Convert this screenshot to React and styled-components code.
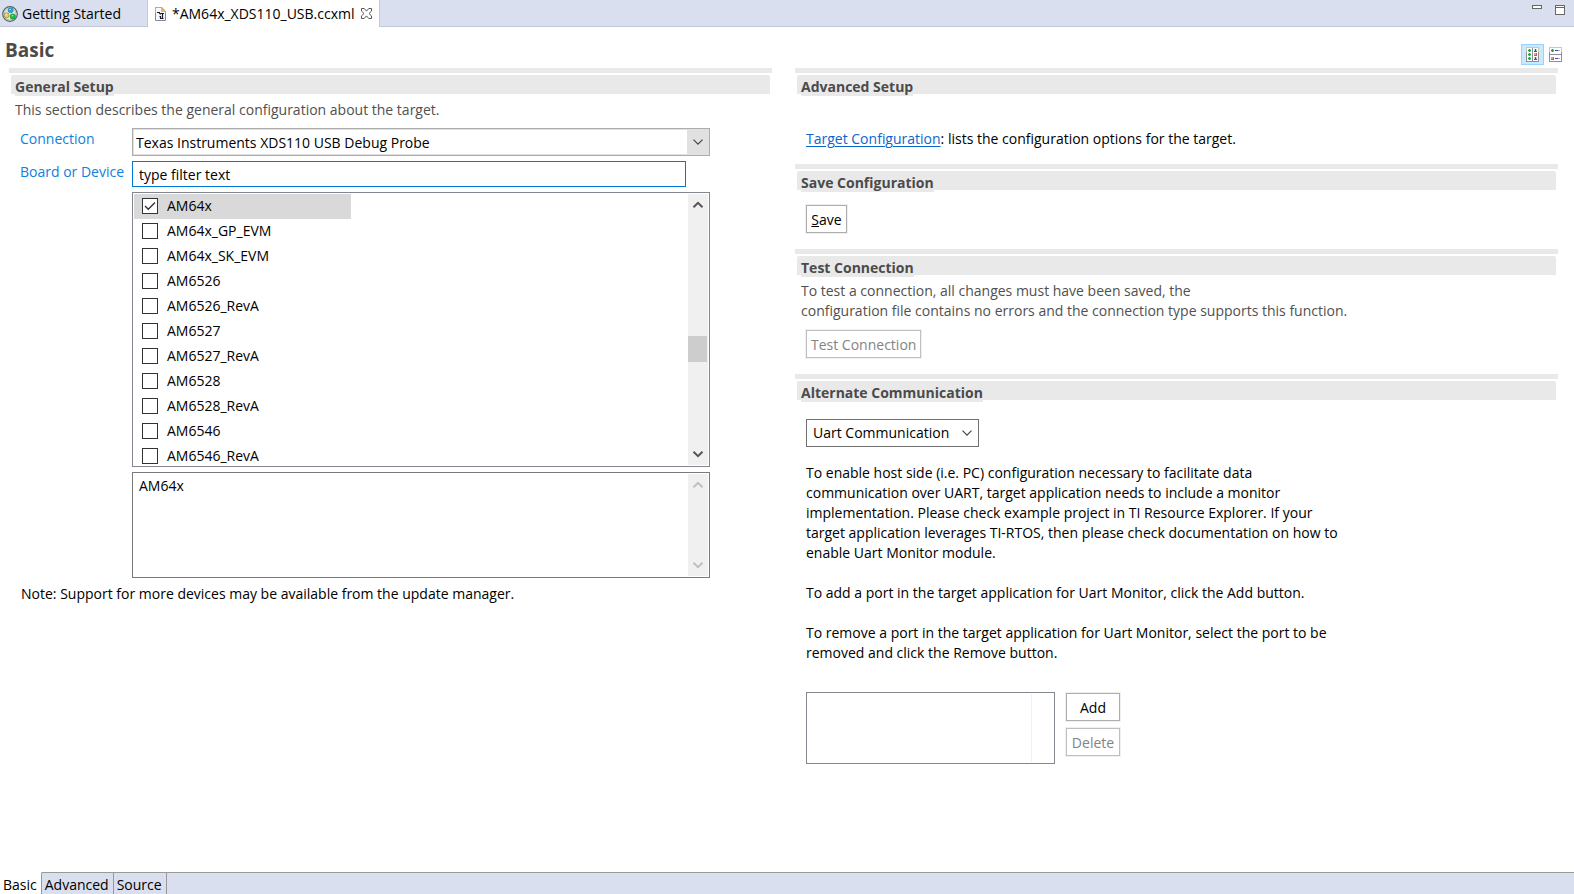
import React, { useState } from "react";
import styled, { createGlobalStyle, css } from "styled-components";

const colors = {
  text: "#000000",
  muted: "#505050",
  heading: "#4b4b4b",
  bar: "#e9e9e9",
  tabs: "#d9dfef",
  tabsLine: "#c3c8d8",
  label: "#0f80dc",
  link: "#0a66cc",
};

const GlobalStyle = createGlobalStyle`
  *, *::before, *::after { box-sizing: border-box; }
  body { margin: 0; background: #fff; }
  body, button, input, select, textarea {
    font-family: "Open Sans", "Noto Sans", sans-serif;
    font-size: 14px;
    line-height: 20px;
    color: ${colors.text};
  }
`;

const Page = styled.div`
  display: flex;
  flex-direction: column;
  min-height: 100vh;
`;

const TabBar = styled.nav`
  display: flex;
  height: 27px;
  background: ${colors.tabs};
  border-bottom: 1px solid ${colors.tabsLine};
`;

const EditorTab = styled.button`
  display: flex;
  align-items: center;
  gap: 4px;
  height: 27px;
  padding: 0 26px 0 2px;
  border: 0;
  border-right: 1px solid ${colors.tabsLine};
  background: none;
  white-space: nowrap;
  ${(p) =>
    p.$active &&
    css`
      gap: 6px;
      padding: 0 7px;
      background: #fff;
    `}
`;

const WindowButtons = styled.div`
  display: flex;
  align-items: flex-start;
  gap: 13px;
  margin-left: auto;
  padding: 5px 9px 0 0;
`;

const IconButton = styled.button`
  display: flex;
  padding: 0;
  border: 0;
  background: none;
`;

const PageHeader = styled.header`
  display: flex;
  align-items: flex-start;
  justify-content: space-between;
  height: 41px;
  padding: 9px 7px 0 5px;
`;

const PageTitle = styled.h1`
  margin: 0;
  font-size: 19px;
  line-height: 28px;
  font-weight: 700;
  color: ${colors.heading};
`;

const ViewButtons = styled.div`
  display: flex;
  padding-top: 8px;
`;

const ViewButton = styled.button`
  display: flex;
  align-items: center;
  justify-content: center;
  width: 23px;
  height: 21px;
  padding: 0;
  border: 1px solid ${(p) => (p.$active ? "#99d1ff" : "transparent")};
  background: ${(p) => (p.$active ? "#cce8ff" : "none")};
`;

const Columns = styled.main`
  flex: 1;
  display: grid;
  grid-template-columns: minmax(0, 1fr) minmax(0, 1fr);
  column-gap: 23px;
  align-items: start;
  padding: 0 16px 16px 9px;
`;

const SectionBox = styled.section`
  border-top: 5px solid ${colors.bar};
  padding-top: 2px;
`;

const SectionBar = styled.div`
  height: 19px;
  margin: 0 2px;
  padding: 0 4px;
  background: ${colors.bar};
  border-radius: 2px 2px 0 0;
`;

const SectionTitle = styled.h2`
  display: inline-block;
  margin: 0;
  padding-top: 3px;
  font-size: 14px;
  line-height: 18px;
  font-weight: 700;
  color: ${colors.heading};
  background: ${colors.bar};
`;

const Description = styled.p`
  margin: 0;
  padding: 6px 6px 0;
  color: ${colors.muted};
`;

const SectionBody = styled.div`
  padding: ${(p) => p.$top}px 0 ${(p) => p.$bottom || 16}px 11px;
`;

const SetupForm = styled.form`
  display: grid;
  grid-template-columns: 112px minmax(0, 1fr);
  row-gap: 5px;
  padding: 8px 62px 0 11px;
`;

const FieldLabel = styled.label`
  line-height: 22px;
  color: ${colors.label};
`;

const SelectBox = styled.div`
  display: grid;
  grid-template-columns: minmax(0, 1fr) 22px;
  align-items: center;
  height: 28px;
  border: ${(p) => (p.$wide ? "1px solid #adadad" : "1px solid #707070")};
  width: ${(p) => (p.$wide ? "100%" : "173px")};
  background: ${(p) =>
    p.$wide ? "linear-gradient(to left, #e1e1e1 22px, #fff 22px)" : "#fff"};
  box-shadow: ${(p) => (p.$wide ? "inset 0 0 0 1px #e1e1e1" : "none")};

  select {
    grid-column: 1 / -1;
    grid-row: 1;
    height: 26px;
    padding: ${(p) => (p.$wide ? "2px 22px 0 3px" : "0 22px 0 6px")};
    border: 0;
    outline: 0;
    appearance: none;
    background: none;
  }

  svg {
    grid-column: 2;
    grid-row: 1;
    justify-self: center;
    pointer-events: none;
  }
`;

const FilterInput = styled.input`
  grid-column: 2;
  height: 26px;
  margin: 0 24px 0 0;
  padding: 0 6px;
  border: 1px solid #0078d7;
  outline: 0;
`;

const ScrollPane = styled.div`
  grid-column: 2;
  display: flex;
  height: ${(p) => p.$height}px;
  padding: 1px;
  border: 1px solid ${(p) => p.$line};
`;

const DeviceList = styled.ul`
  flex: 1;
  margin: 0;
  padding: 0;
  list-style: none;
  overflow: hidden;
`;

const DeviceRow = styled.label`
  display: flex;
  align-items: center;
  gap: 9px;
  width: 217px;
  height: 25px;
  padding: 0 0 1px 8px;
  background: ${(p) => (p.$selected ? "#d9d9d9" : "none")};
`;

const CheckBox = styled.input`
  appearance: none;
  flex: none;
  width: 16px;
  height: 16px;
  margin: 0;
  border: 1px solid #333;
  background: #fff;

  &:checked {
    background: #fff
      url("data:image/svg+xml,%3Csvg xmlns='http://www.w3.org/2000/svg' width='14' height='14' fill='none' stroke='%23333' stroke-width='1.4'%3E%3Cpath d='M2 7l3.3 3.3L12 3.6'/%3E%3C/svg%3E")
      center no-repeat;
  }
`;

const ScrollBar = styled.div`
  display: flex;
  flex-direction: column;
  align-items: center;
  width: 20px;
  padding: 7px 1px 7px 0;
  background: #f0f0f0;
`;

const ScrollTrack = styled.div`
  flex: 1;
  align-self: stretch;
  display: grid;
  grid-template-rows: 128fr 26px 89fr;
`;

const ScrollThumb = styled.div`
  grid-row: 2;
  background: #cdcdcd;
`;

const Details = styled.textarea`
  flex: 1;
  padding: 2px 5px;
  border: 0;
  outline: 0;
  resize: none;
  overflow: hidden;
`;

const Note = styled.p`
  margin: 0;
  padding: 6px 12px;
`;

const TextLink = styled.a`
  color: ${colors.link};
  text-underline-offset: 2px;
`;

const PushButton = styled.button`
  display: block;
  height: 28px;
  min-width: ${(p) => p.$width}px;
  padding: 2px 4px 0;
  border: 1px solid #adadad;
  background: #fff;
  box-shadow: 0 0 0 1px #f0f0f0;
  white-space: nowrap;

  &:disabled {
    border-color: #bfbfbf;
    color: #838383;
  }
`;

const Copy = styled.div`
  padding-top: 16px;

  p {
    margin: 0 0 20px;
  }
`;

const PortArea = styled.div`
  display: flex;
  gap: 11px;
  padding-top: 9px;
`;

const PortList = styled.div`
  width: 249px;
  height: 72px;
  padding: 1px 22px 1px 1px;
  border: 1px solid #828790;

  &::after {
    content: "";
    display: block;
    height: 100%;
    border-right: 1px solid #edf1f8;
  }
`;

const ButtonStack = styled.div`
  display: flex;
  flex-direction: column;
  gap: 7px;
  padding-top: 1px;
`;

const PageTabs = styled.footer`
  display: flex;
  height: 22px;
  background: ${colors.tabs};
`;

const PageTab = styled.button`
  height: 22px;
  padding: 3px 4px 0 3px;
  border: 0;
  border-right: 1px solid #999;
  border-top: 1px solid ${(p) => (p.$active ? "#fff" : "#999")};
  background: ${(p) => (p.$active ? "#fff" : "none")};
  line-height: 18px;
`;

const TabsFill = styled.div`
  flex: 1;
  border-top: 1px solid #999;
`;

function Chevron({ up, thick, color = "#444" }) {
  return (
    <svg width="12" height="8" viewBox="0 0 12 8" fill="none" stroke={color} strokeWidth={thick ? 2 : 1.2} aria-hidden="true">
      <path d={up ? "M1.5 6.3 6 1.8l4.5 4.5" : "M1.5 1.7 6 6.2l4.5-4.5"} />
    </svg>
  );
}

function CubesIcon() {
  return (
    <svg width="16" height="16" viewBox="0 0 16 16" aria-hidden="true">
      <circle cx="8" cy="8" r="7.3" fill="#dfe6dc" stroke="#4d6470" strokeWidth="1.2" />
      <circle cx="8" cy="8" r="6" fill="none" stroke="#a9b6b0" strokeWidth=".8" />
      <circle cx="8.6" cy="4.3" r="2.5" fill="#25a8dc" stroke="#1c7698" strokeWidth=".6" />
      <circle cx="4.6" cy="9.3" r="2.5" fill="#f0cf45" stroke="#94792a" strokeWidth=".6" />
      <circle cx="10.8" cy="10.5" r="2.6" fill="#14c83c" stroke="#0b7a2c" strokeWidth=".6" />
      <path d="M7.5 3.5h1.4M3.6 8.6H5M9.8 9.7h1.4" stroke="#fff" strokeOpacity=".7" />
    </svg>
  );
}

function ConfigFileIcon() {
  return (
    <svg width="11" height="14" viewBox="0 0 11 14" aria-hidden="true">
      <path d="M.5.5h6.2l3.8 3.8v9.2H.5z" fill="#f7f8fb" stroke="#7f87a3" />
      <path d="M.5 6V.5h6.2l3.8 3.8V6" fill="none" stroke="#c8ac62" />
      <path d="M6.5.5v4h4z" fill="#e4bf6c" stroke="#c8ac62" strokeWidth=".7" />
      <path d="M2 5.5h3M4 5.5l1.5 2M5 6.5h4M7.5 6.5v5M4.5 9.5h1v2h3" fill="none" stroke="#1c1c24" strokeWidth="1.2" />
    </svg>
  );
}

function CloseIcon() {
  return (
    <svg width="11" height="11" viewBox="0 0 11 11" fill="#fff" stroke="#555" aria-hidden="true">
      <path d="M.5.5h2.7l2.3 2.6L7.8.5h2.7v2.6L8 5.5l2.5 2.4v2.6H7.8L5.5 7.9l-2.3 2.6H.5V7.9L3 5.5.5 3.1z" />
    </svg>
  );
}

function MinimizeIcon() {
  return (
    <svg width="10" height="4" shapeRendering="crispEdges" aria-hidden="true">
      <rect x=".5" y=".5" width="9" height="3" fill="#fff" stroke="#666" />
    </svg>
  );
}

function MaximizeIcon() {
  return (
    <svg width="10" height="10" shapeRendering="crispEdges" aria-hidden="true">
      <path d="M.5.5h9v9h-9zM0 2.5h10" fill="#fff" stroke="#666" />
    </svg>
  );
}

function PlusDot({ x, y }) {
  return (
    <g transform={`translate(${x} ${y})`}>
      <path d="M0 0h3v3H0z" fill="#a5e0ae" />
      <path d="M1 0h1v3H1zM0 1h3v1H0z" fill="#1da547" />
    </g>
  );
}

function UserDot({ x, y }) {
  return (
    <g transform={`translate(${x} ${y})`}>
      <path d="M0 0h3v2H0z" fill="#a9d8f4" />
      <path d="M1 0h1v2H1zM0 2h3v1H0z" fill="#2458bd" />
    </g>
  );
}

function RedDot({ x, y }) {
  return (
    <g transform={`translate(${x} ${y})`}>
      <path d="M0 0h3v3H0z" fill="#d9534f" />
      <path d="M0 0h2v2H0z" fill="#eb9c97" />
    </g>
  );
}

function HorizontalLayoutIcon() {
  return (
    <svg width="13" height="15" shapeRendering="crispEdges" aria-hidden="true">
      <path d="M.5.5h12v14H.5z" fill="#fff" stroke="#928f8f" />
      <path d="M6 0h1v15H6z" fill="#928f8f" />
      <path d="M.5 5V.5h12V5" fill="none" stroke="#cfcca0" />
      <PlusDot x={2} y={2} />
      <PlusDot x={2} y={6} />
      <PlusDot x={2} y={10} />
      <UserDot x={8} y={2} />
      <RedDot x={8} y={6} />
      <UserDot x={8} y={10} />
    </svg>
  );
}

function VerticalLayoutIcon() {
  return (
    <svg width="13" height="15" shapeRendering="crispEdges" aria-hidden="true">
      <path d="M.5.5h12v14H.5z" fill="#fff" stroke="#928f8f" />
      <path d="M0 7h13v1H0z" fill="#928f8f" />
      <path d="M.5 5V.5h12V5" fill="none" stroke="#cfcca0" />
      <PlusDot x={2} y={2} />
      <RedDot x={2} y={10} />
      <path d="M6 3h3v1H6zM6 11h3v1H6z" fill="#2b50c0" />
      <path d="M9 3h2v1H9zM9 11h2v1H9z" fill="#a7b2d6" />
    </svg>
  );
}

function Section({ title, children }) {
  return (
    <SectionBox>
      <SectionBar>
        <SectionTitle>{title}</SectionTitle>
      </SectionBar>
      {children}
    </SectionBox>
  );
}

function Scroller({ disabled }) {
  const color = disabled ? "#bfbfbf" : "#555";
  return (
    <ScrollBar aria-hidden="true">
      <Chevron up thick color={color} />
      <ScrollTrack>{!disabled && <ScrollThumb />}</ScrollTrack>
      <Chevron thick color={color} />
    </ScrollBar>
  );
}

const devices = [
  "AM64x",
  "AM64x_GP_EVM",
  "AM64x_SK_EVM",
  "AM6526",
  "AM6526_RevA",
  "AM6527",
  "AM6527_RevA",
  "AM6528",
  "AM6528_RevA",
  "AM6546",
  "AM6546_RevA",
];

export default function App() {
  const [selected, setSelected] = useState("AM64x");
  const [filter, setFilter] = useState("type filter text");

  return (
    <>
      <GlobalStyle />
      <Page>
        <TabBar aria-label="Editors">
          <EditorTab type="button">
            <CubesIcon />
            Getting Started
          </EditorTab>
          <EditorTab type="button" $active>
            <ConfigFileIcon />
            *AM64x_XDS110_USB.ccxml
            <CloseIcon />
          </EditorTab>
          <WindowButtons>
            <IconButton type="button" aria-label="Minimize"><MinimizeIcon /></IconButton>
            <IconButton type="button" aria-label="Maximize"><MaximizeIcon /></IconButton>
          </WindowButtons>
        </TabBar>

        <PageHeader>
          <PageTitle>Basic</PageTitle>
          <ViewButtons>
            <ViewButton type="button" aria-label="Horizontal layout" $active><HorizontalLayoutIcon /></ViewButton>
            <ViewButton type="button" aria-label="Vertical layout"><VerticalLayoutIcon /></ViewButton>
          </ViewButtons>
        </PageHeader>

        <Columns>
          <Section title="General Setup">
            <Description>This section describes the general configuration about the target.</Description>
            <SetupForm onSubmit={(e) => e.preventDefault()}>
              <FieldLabel htmlFor="connection">Connection</FieldLabel>
              <SelectBox $wide>
                <select id="connection">
                  <option>Texas Instruments XDS110 USB Debug Probe</option>
                </select>
                <Chevron />
              </SelectBox>
              <FieldLabel htmlFor="filter">Board or Device</FieldLabel>
              <FilterInput id="filter" value={filter} onChange={(e) => setFilter(e.target.value)} />
              <ScrollPane $height={275} $line="#828790">
                <DeviceList>
                  {devices.map((name) => (
                    <li key={name}>
                      <DeviceRow $selected={name === selected}>
                        <CheckBox type="checkbox" checked={name === selected} onChange={() => setSelected(name)} />
                        {name}
                      </DeviceRow>
                    </li>
                  ))}
                </DeviceList>
                <Scroller />
              </ScrollPane>
              <ScrollPane $height={106} $line="#7a7a7a">
                <Details aria-label="Device description" readOnly value={selected} />
                <Scroller disabled />
              </ScrollPane>
            </SetupForm>
            <Note>Note: Support for more devices may be available from the update manager.</Note>
          </Section>

          <div>
            <Section title="Advanced Setup">
              <SectionBody $top={35} $bottom={15}>
                <TextLink href="#target">Target Configuration</TextLink>: lists the configuration options for the target.
              </SectionBody>
            </Section>
            <Section title="Save Configuration">
              <SectionBody $top={15}>
                <PushButton type="button" $width={41}><u>S</u>ave</PushButton>
              </SectionBody>
            </Section>
            <Section title="Test Connection">
              <Description>
                To test a connection, all changes must have been saved, the
                <br />
                configuration file contains no errors and the connection type supports this function.
              </Description>
              <SectionBody $top={9}>
                <PushButton type="button" $width={115} disabled>Test Connection</PushButton>
              </SectionBody>
            </Section>
            <Section title="Alternate Communication">
              <SectionBody $top={19}>
                <SelectBox>
                  <select aria-label="Communication type">
                    <option>Uart Communication</option>
                  </select>
                  <Chevron />
                </SelectBox>
                <Copy>
                  <p>
                    To enable host side (i.e. PC) configuration necessary to facilitate data
                    <br />
                    communication over UART, target application needs to include a monitor
                    <br />
                    implementation. Please check example project in TI Resource Explorer. If your
                    <br />
                    target application leverages TI-RTOS, then please check documentation on how to
                    <br />
                    enable Uart Monitor module.
                  </p>
                  <p>To add a port in the target application for Uart Monitor, click the Add button.</p>
                  <p>
                    To remove a port in the target application for Uart Monitor, select the port to be
                    <br />
                    removed and click the Remove button.
                  </p>
                </Copy>
                <PortArea>
                  <PortList role="listbox" aria-label="Ports" />
                  <ButtonStack>
                    <PushButton type="button" $width={54}>Add</PushButton>
                    <PushButton type="button" $width={54} disabled>Delete</PushButton>
                  </ButtonStack>
                </PortArea>
              </SectionBody>
            </Section>
          </div>
        </Columns>

        <PageTabs>
          <PageTab type="button" $active>Basic</PageTab>
          <PageTab type="button">Advanced</PageTab>
          <PageTab type="button">Source</PageTab>
          <TabsFill />
        </PageTabs>
      </Page>
    </>
  );
}
